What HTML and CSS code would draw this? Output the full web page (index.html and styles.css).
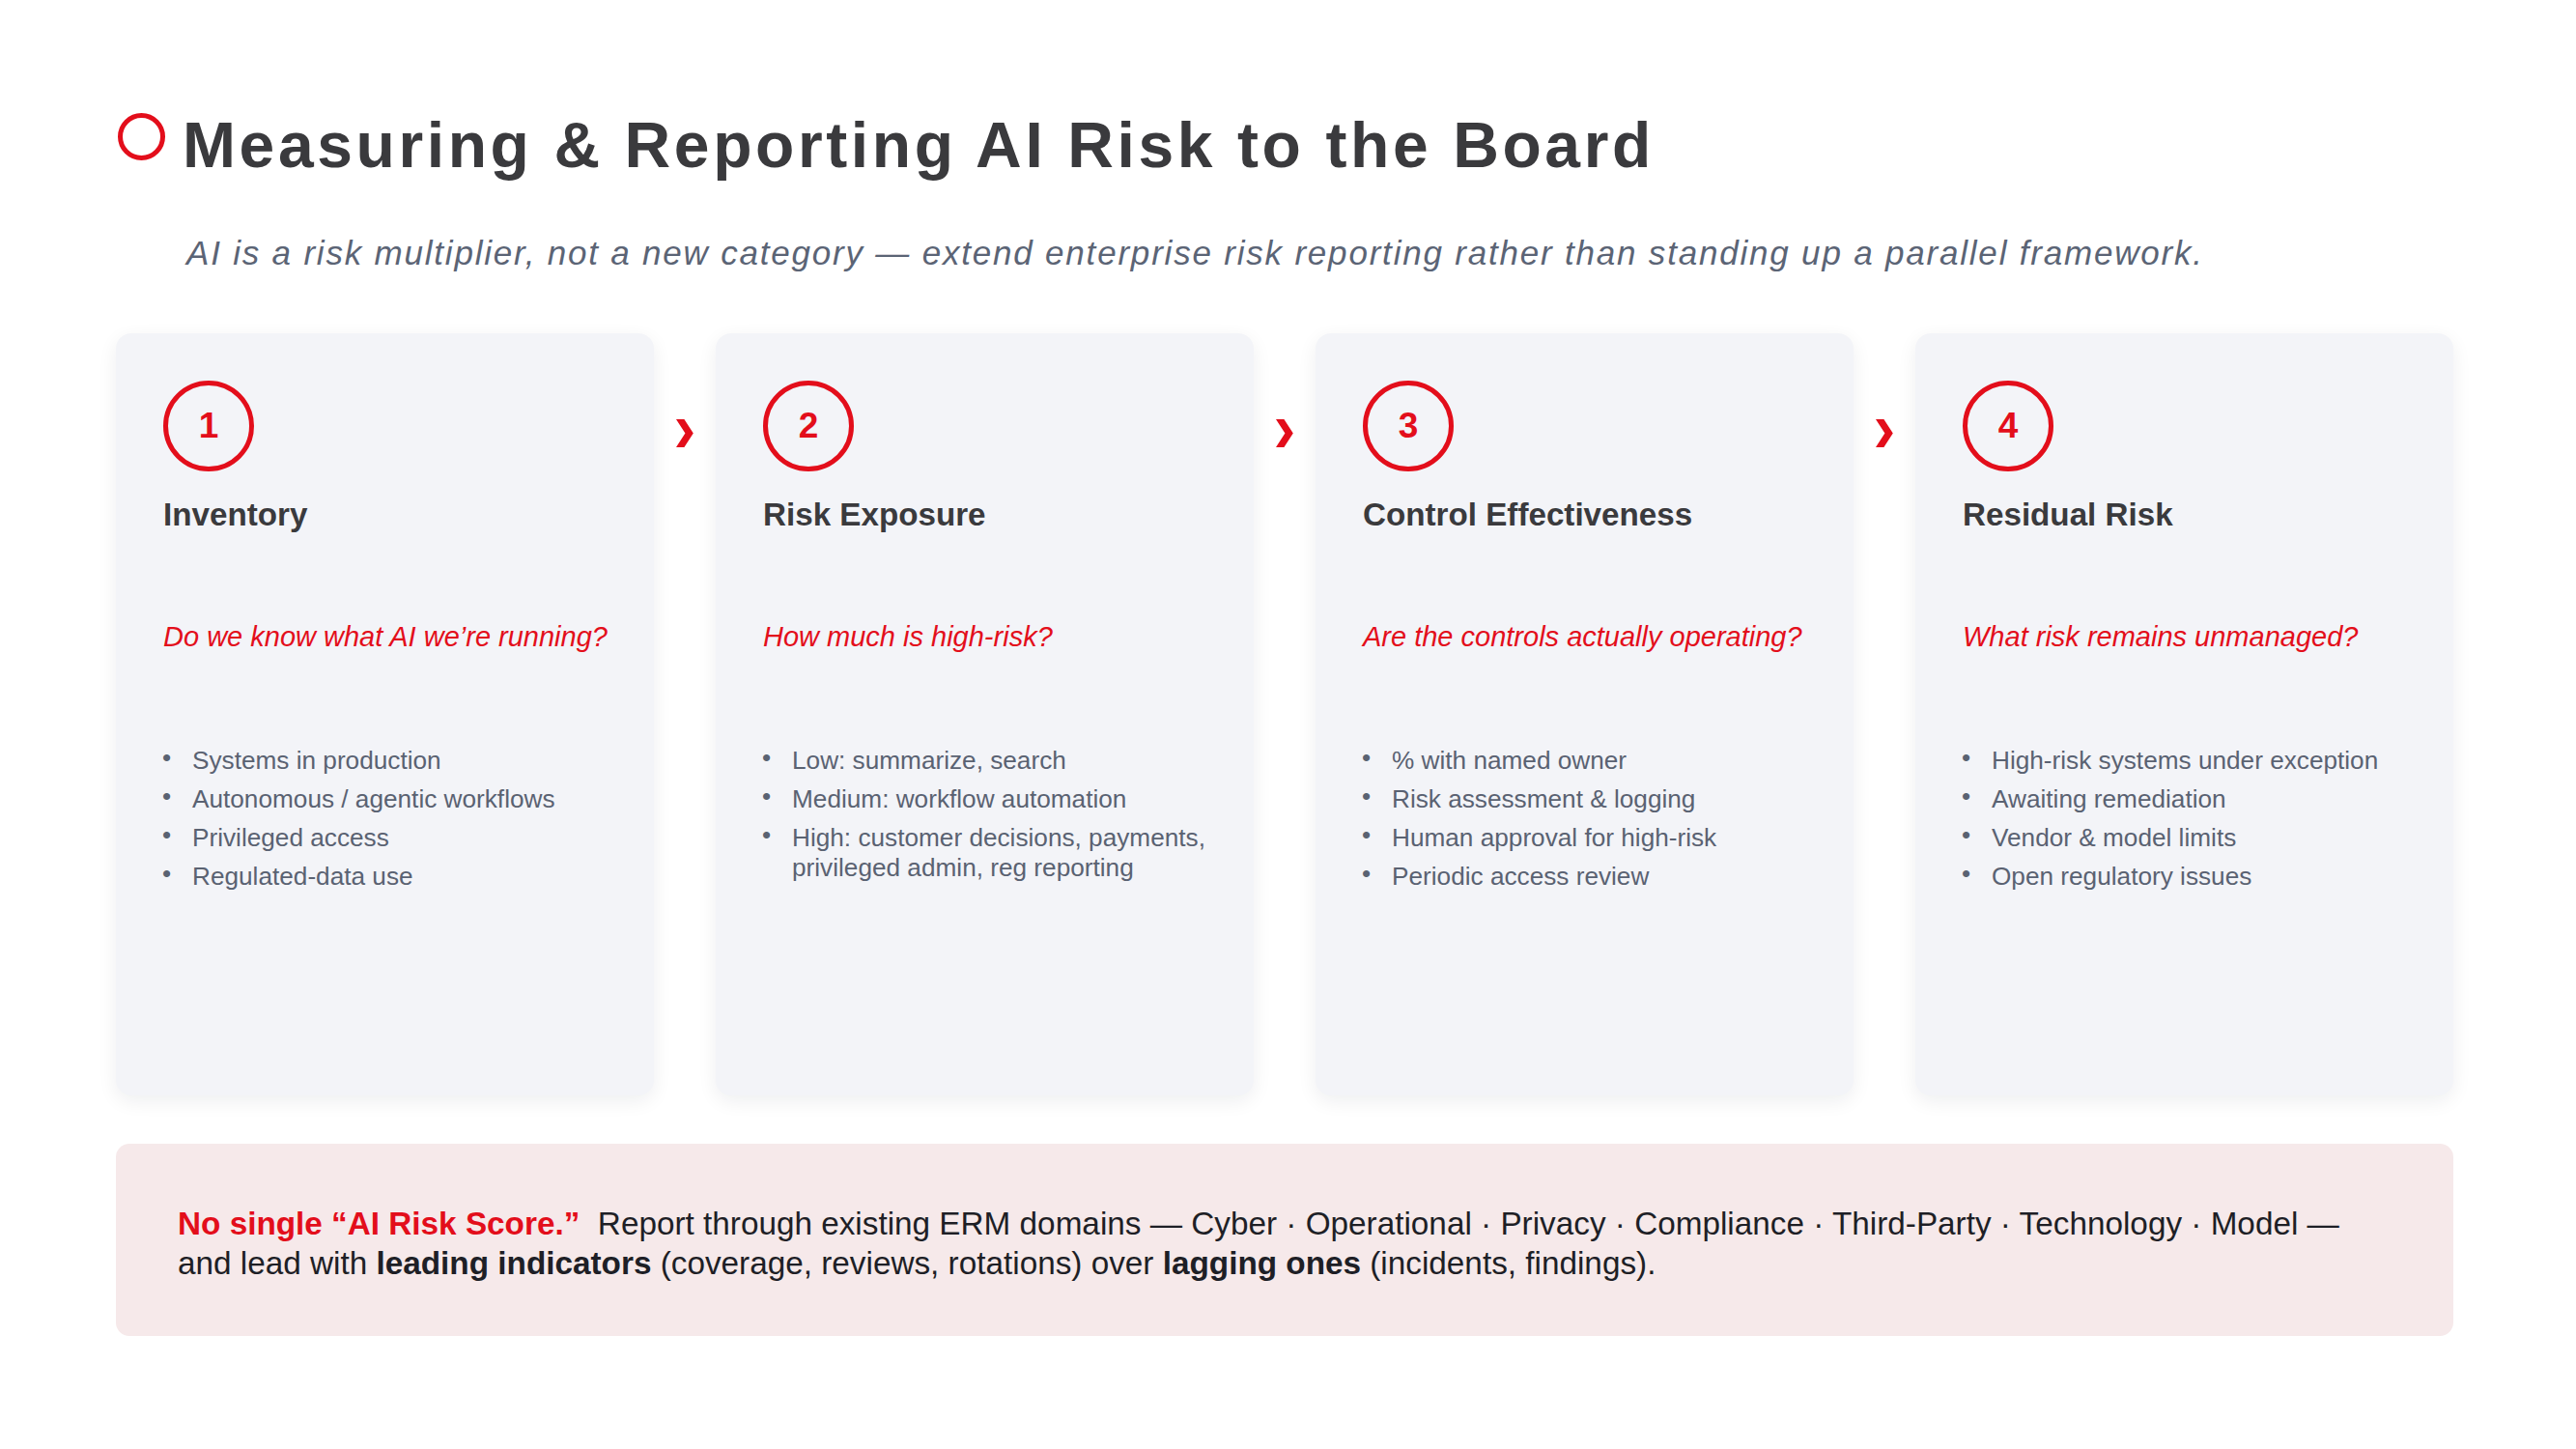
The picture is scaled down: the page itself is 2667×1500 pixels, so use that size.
FILE: index.html
```html
<!DOCTYPE html>
<html lang="en">
<head>
<meta charset="utf-8">
<title>Measuring &amp; Reporting AI Risk to the Board</title>
<link rel="stylesheet" href="styles.css">
</head>
<body>
<div class="page">
  <header class="title-row">
    <span class="title-ring"></span>
    <h1 class="title">Measuring &amp; Reporting AI Risk to the Board</h1>
  </header>
  <p class="subtitle">AI is a risk multiplier, not a new category — extend enterprise risk reporting rather than standing up a parallel framework.</p>

  <section class="steps">
    <article class="card">
      <div class="num">1</div>
      <h2 class="card-title">Inventory</h2>
      <p class="question">Do we know what AI we’re running?</p>
      <ul class="points">
        <li>Systems in production</li>
        <li>Autonomous / agentic workflows</li>
        <li>Privileged access</li>
        <li>Regulated-data use</li>
      </ul>
    </article>
    <div class="arrow"><svg width="18" height="29" viewBox="0 0 18 29"><polygon points="0,0 8.4,0 17.8,14.5 8.4,29 0,29 9.4,14.5" fill="#e30e1b"/></svg></div>
    <article class="card">
      <div class="num">2</div>
      <h2 class="card-title">Risk Exposure</h2>
      <p class="question">How much is high-risk?</p>
      <ul class="points">
        <li>Low: summarize, search</li>
        <li>Medium: workflow automation</li>
        <li>High: customer decisions, payments, privileged admin, reg reporting</li>
      </ul>
    </article>
    <div class="arrow"><svg width="18" height="29" viewBox="0 0 18 29"><polygon points="0,0 8.4,0 17.8,14.5 8.4,29 0,29 9.4,14.5" fill="#e30e1b"/></svg></div>
    <article class="card">
      <div class="num">3</div>
      <h2 class="card-title">Control Effectiveness</h2>
      <p class="question">Are the controls actually operating?</p>
      <ul class="points">
        <li>% with named owner</li>
        <li>Risk assessment &amp; logging</li>
        <li>Human approval for high-risk</li>
        <li>Periodic access review</li>
      </ul>
    </article>
    <div class="arrow"><svg width="18" height="29" viewBox="0 0 18 29"><polygon points="0,0 8.4,0 17.8,14.5 8.4,29 0,29 9.4,14.5" fill="#e30e1b"/></svg></div>
    <article class="card">
      <div class="num">4</div>
      <h2 class="card-title">Residual Risk</h2>
      <p class="question">What risk remains unmanaged?</p>
      <ul class="points">
        <li>High-risk systems under exception</li>
        <li>Awaiting remediation</li>
        <li>Vendor &amp; model limits</li>
        <li>Open regulatory issues</li>
      </ul>
    </article>
  </section>

  <aside class="note">
    <p><strong class="hl">No single “AI Risk Score.”</strong>&nbsp; Report through existing ERM domains — Cyber · Operational · Privacy · Compliance · Third-Party · Technology · Model — and lead with <strong>leading indicators</strong> (coverage, reviews, rotations) over <strong>lagging ones</strong> (incidents, findings).</p>
  </aside>
</div>
</body>
</html>
```

FILE: styles.css
```css
* { box-sizing: border-box; }

html, body {
  margin: 0;
  padding: 0;
  background: #ffffff;
}

body {
  font-family: "Liberation Sans", Arial, sans-serif;
  color: #3a3a3d;
}

.page {
  width: 2667px;
  padding: 111px 127px 0 120px;
}

.title-row {
  display: flex;
  align-items: flex-start;
  gap: 18px;
}

.title-ring {
  flex: none;
  width: 49px;
  height: 49px;
  margin: 6px 0 0 2px;
  border: 5px solid #e30e1b;
  border-radius: 50%;
}

.title {
  margin: 0;
  font-size: 66px;
  line-height: 78px;
  font-weight: 700;
  letter-spacing: 3.6px;
  color: #3a3a3d;
}

.subtitle {
  margin: 50px 0 0 73px;
  font-size: 35px;
  line-height: 45.5px;
  font-style: italic;
  letter-spacing: 1.8px;
  color: #5b6475;
}

.steps {
  display: flex;
  margin-top: 60px;
  height: 789px;
}

.card {
  flex: 1 1 0;
  min-width: 0;
  background: #f3f4f8;
  border-radius: 16px;
  box-shadow: 0 6px 20px rgba(15, 23, 42, 0.07);
  padding: 49px 36px 0 49px;
}

.arrow {
  flex: none;
  width: 64px;
  display: flex;
  justify-content: center;
  padding-top: 89px;
}

.num {
  width: 94px;
  height: 94px;
  border: 5px solid #e30e1b;
  border-radius: 50%;
  display: flex;
  align-items: center;
  justify-content: center;
  font-size: 37px;
  font-weight: 700;
  color: #e30e1b;
}

.card-title {
  margin: 25px 0 0;
  font-size: 33.2px;
  line-height: 40px;
  font-weight: 700;
  color: #3a3a3d;
}

.question {
  margin: 88px 0 0;
  font-size: 29px;
  line-height: 36px;
  font-style: italic;
  color: #e30e1b;
}

.points {
  list-style: none;
  margin: 95px 0 0;
  padding: 0;
}

.points li {
  display: flex;
  font-size: 26.2px;
  line-height: 31px;
  color: #5a6272;
  margin-bottom: 9px;
}

.points li::before {
  content: "•";
  flex: none;
  width: 30px;
  margin-top: -3px;
  margin-left: -1px;
  margin-right: 1px;
  color: #5a6272;
}

.note {
  margin-top: 50px;
  background: #f6e9ea;
  border-radius: 14px;
  padding: 62px 80px 55px 64px;
}

.note p {
  margin: 0;
  font-size: 33.3px;
  line-height: 41px;
  color: #1e1f26;
}

.note strong {
  font-weight: 700;
  color: #1e1f26;
}

.note .hl {
  color: #e30e1b;
}
```
